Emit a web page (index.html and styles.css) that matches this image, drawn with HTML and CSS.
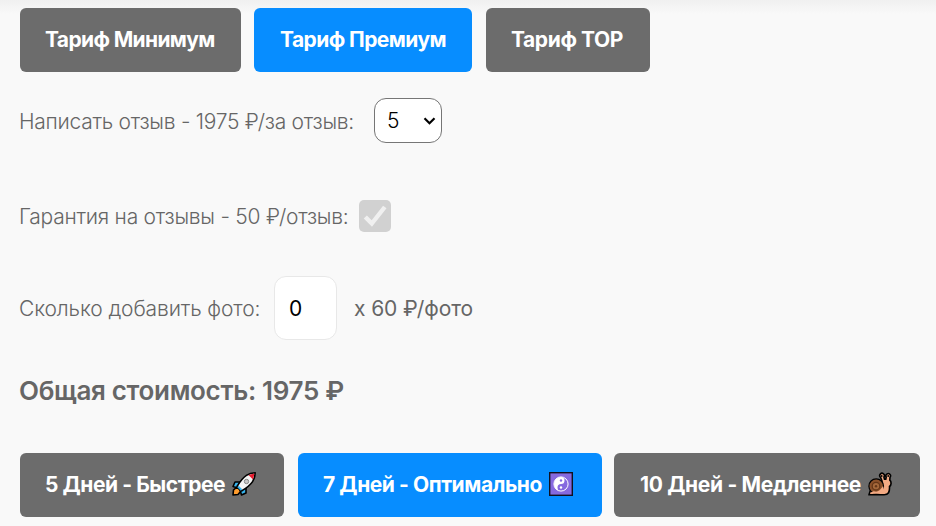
FILE: index.html
```html
<!DOCTYPE html>
<html lang="ru">

<head>
  <meta charset="UTF-8">
  <meta name="viewport" content="width=device-width, initial-scale=1.0">
  <title>Калькулятор отзывов</title>
  <link rel="stylesheet" href="styles.css">
</head>

<body>
  <main class="calculator">
    <div class="buttons">
      <button type="button" class="btn btn_minimum"><span>Тариф Минимум</span></button>
      <button type="button" class="btn btn_premium active"><span>Тариф Премиум</span></button>
      <button type="button" class="btn btn_top"><span>Тариф TOP</span></button>
    </div>

    <div class="row row_reviews">
      <label class="label_reviews" for="reviews">Написать отзыв - 1975 ₽/за отзыв:</label>
      <div class="select">
        <select id="reviews">
          <option>5</option>
        </select>
        <svg class="arrow" viewBox="0 0 12 8"><path d="M1 1.3 6 6.2 11 1.3" fill="none" stroke="#000" stroke-width="2.2" /></svg>
      </div>
    </div>

    <div class="row row_guarantee">
      <span class="label_guarantee">Гарантия на отзывы - 50 ₽/отзыв:</span>
      <svg class="checkbox" viewBox="0 0 32 32">
        <rect width="32" height="32" rx="5" fill="#d1d1d1" />
        <path d="M6.3 17 12.8 23.5 25.8 7" fill="none" stroke="#f0f0f0" stroke-width="4.4" />
      </svg>
    </div>

    <div class="row row_photos">
      <label class="label_photos" for="photos">Сколько добавить фото:</label>
      <input type="text" id="photos" value="0">
      <span class="price">x 60 ₽/фото</span>
    </div>

    <p class="total">Общая стоимость: 1975 ₽</p>

    <div class="buttons">
      <button type="button" class="btn btn_fast">
        <span>5 Дней - Быстрее</span>
        <svg class="icon" viewBox="0 0 24 24">
          <g stroke="#000" stroke-width="1.6" stroke-linejoin="round">
            <path d="M5 15 1.5 18 1 23 6 22.5 9 19Z" fill="#ff9d2e" />
            <path d="M8 10 3 10 1 14.5 6 16ZM14 16 14 21 9.5 23 8 18Z" fill="#36b4ee" />
            <path d="M23.2.8C17 1 12 3 5 14.5L9.5 19C21 12 23 7 23.2.8Z" fill="#f5f5f5" />
          </g>
          <path d="M22.5 1.5 16.5 3 21 7.5Z" fill="#e8192c" />
          <circle cx="14.5" cy="9.5" r="2.2" fill="#c8c8c8" stroke="#888" />
          <path d="M6 14.5 9.5 18" stroke="#36b4ee" stroke-width="2" />
        </svg>
      </button>
      <button type="button" class="btn btn_optimal active">
        <span>7 Дней - Оптимально</span>
        <svg class="icon" viewBox="0 0 24 24">
          <rect x=".7" y=".7" width="22.6" height="22.6" fill="#8669df" stroke="#101020" stroke-width="1.4" />
          <circle cx="12" cy="12" r="7.1" fill="#8669df" stroke="#fff" stroke-width="1" />
          <path d="M12 5a3.5 3.5 0 0 1 0 7 3.5 3.5 0 0 0 0 7 7 7 0 0 1 0-14Z" fill="#fff" />
          <circle cx="12" cy="8.5" r="1.2" fill="#8669df" />
          <circle cx="12" cy="15.5" r="1.2" fill="#fff" />
        </svg>
      </button>
      <button type="button" class="btn btn_slow">
        <span>10 Дней - Медленнее</span>
        <svg class="icon" viewBox="0 0 24 24">
          <path d="M2.5 18 1 22.8H16C20.5 22.8 21.8 20 21.5 14.5 23.5 13 23.6 9.8 21.8 8.2L22 5.3A2.3 2.3 0 1 0 18.2 5L17.8 7.3 16.5 7.2 15.9 5A2.3 2.3 0 1 0 12.5 5.3L14 9 14 16Z" fill="#f3aa83" stroke="#000" stroke-width="1.6" stroke-linejoin="round" />
          <circle cx="8.2" cy="14.2" r="7.3" fill="#8c512a" stroke="#000" stroke-width="1.2" />
          <circle cx="8" cy="14.2" r="3.8" fill="#a5683b" stroke="#653718" stroke-width="1.3" />
          <circle cx="8" cy="14.2" r="1.2" fill="#653718" />
          <path d="M2.3 21.8Q4 18.5 7 19.5 11 20.5 15 14L17 21.8Z" fill="#f3aa83" />
          <circle cx="13.7" cy="4" r=".9" />
          <circle cx="20.2" cy="4" r=".9" />
        </svg>
      </button>
    </div>
  </main>
</body>

</html>
```

FILE: styles.css
```css
* {
  box-sizing: border-box;
}

body {
  margin: 0;
  height: 526px;
  overflow: hidden;
  background: linear-gradient(180deg, #f0f0f0 0, #f9f9f9 14px);
  font-family: Inter, "Noto Sans", sans-serif;
  font-size: 21px;
  color: #666;
}

.calculator {
  padding: 8px 0 0 20px;
}

.buttons {
  display: flex;
  gap: 13px;
}

.btn {
  display: flex;
  align-items: center;
  height: 64px;
  padding: 0 0 2px 25px;
  border: none;
  border-radius: 6px;
  background-color: #6c6c6c;
  color: #fff;
  font-family: inherit;
  font-size: 21px;
  font-weight: 700;
  white-space: nowrap;
}

.btn.active {
  background-color: #078dff;
}

.btn_minimum {
  width: 221px;
  letter-spacing: -0.64px;
}

.btn_premium {
  width: 218px;
  margin-right: 1px;
  padding-left: 26px;
  letter-spacing: -0.57px;
}

.btn_top {
  width: 164px;
  letter-spacing: -0.4px;
}

.btn_fast {
  width: 264px;
  letter-spacing: -0.43px;
}

.btn_optimal {
  width: 304px;
  margin-left: 1px;
  letter-spacing: -0.43px;
}

.btn_slow {
  width: 306px;
  margin-left: -1px;
  padding-left: 26px;
  letter-spacing: -0.33px;
}

.icon {
  width: 24px;
  height: 24px;
  margin-left: 7px;
}

.row {
  display: flex;
  align-items: center;
  font-weight: 350;
  white-space: nowrap;
}

.row_reviews {
  height: 45px;
  margin-top: 26px;
}

.label_reviews {
  width: 355px;
  margin-left: -1px;
  padding-top: 1px;
  letter-spacing: -0.27px;
}

.select {
  position: relative;
  width: 68px;
  height: 45px;
}

.select select {
  width: 100%;
  height: 100%;
  padding: 0 0 0 12px;
  border: 1px solid #767676;
  border-radius: 12px;
  appearance: none;
  background-color: #fff;
  color: #000;
  font: inherit;
}

.arrow {
  position: absolute;
  top: 19px;
  right: 6px;
  width: 13px;
  height: 8px;
}

.row_guarantee {
  height: 32px;
  margin-top: 57px;
}

.label_guarantee {
  width: 340px;
  margin-left: -1px;
  padding-top: 1px;
  letter-spacing: -0.25px;
}

.checkbox {
  width: 32px;
  height: 32px;
}

.row_photos {
  height: 64px;
  margin-top: 44px;
}

.label_photos {
  width: 255px;
  margin-left: -1px;
  letter-spacing: -0.12px;
}

.row_photos input {
  width: 63px;
  height: 64px;
  padding: 0 0 0 14px;
  border: 1px solid #e8e8e8;
  border-radius: 12px;
  background-color: #fff;
  color: #000;
  font: inherit;
  font-weight: 400;
}

.price {
  margin-left: 17px;
  font-weight: 400;
  letter-spacing: -0.1px;
}

.total {
  height: 36px;
  margin: 33px 0 44px -1px;
  font-size: 26px;
  font-weight: 600;
  line-height: 36px;
  letter-spacing: -0.33px;
}
```
